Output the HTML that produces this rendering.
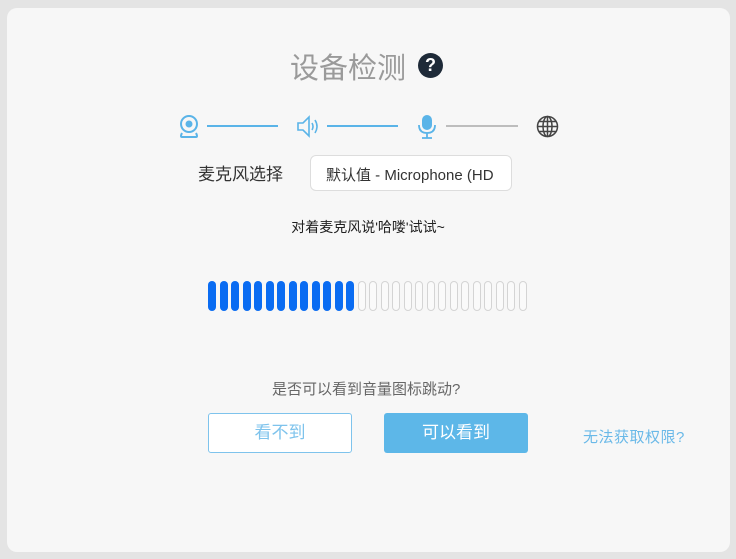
<!DOCTYPE html>
<html><head><meta charset="utf-8"><style>
body{margin:0;width:736px;height:559px;background:#e4e4e4;font-family:"Liberation Sans","Noto Sans CJK SC",sans-serif;position:relative;overflow:hidden}
.card{position:absolute;left:7px;top:8px;width:723px;height:544px;background:#f7f7f7;border-radius:10px}
.a{position:absolute;white-space:nowrap}
.line{position:absolute;height:2px;top:125px}
.bar{position:absolute;top:281px;width:6px;height:28px;border-radius:4px}
</style></head><body>
<div class="card"></div>
<div class="a" style="left:290px;top:45px;font-size:29px;color:#9a9a9a">设备检测</div>
<div class="a" style="left:418px;top:53px;width:25px;height:25px;border-radius:50%;background:#1e2a38;color:#fff;font-size:18px;font-weight:bold;text-align:center;line-height:25px">?</div>
<svg class="a" style="left:178px;top:114px" width="24" height="26" viewBox="0 0 24 26"><circle cx="11" cy="10" r="8" fill="none" stroke="#5ab4e8" stroke-width="2"/><circle cx="11" cy="10" r="3.5" fill="#5ab4e8"/><path d="M4 19 Q2 23 4 23 H18 Q20 23 18 19" fill="none" stroke="#5ab4e8" stroke-width="2"/></svg>
<div class="line" style="left:207px;width:71px;background:#5ab4e8"></div>
<svg class="a" style="left:296px;top:114px" width="26" height="26" viewBox="0 0 26 26"><path d="M2 9 H7 L13 3 V22 L7 16 H2 Z" fill="none" stroke="#5ab4e8" stroke-width="1.6"/><path d="M16 9 Q18 12.5 16 16 M19 6 Q23 12.5 19 19" fill="none" stroke="#5ab4e8" stroke-width="1.6"/></svg>
<div class="line" style="left:327px;width:71px;background:#5ab4e8"></div>
<svg class="a" style="left:416px;top:114px" width="22" height="26" viewBox="0 0 22 26"><rect x="6" y="1" width="10" height="15" rx="5" fill="#5ab4e8"/><path d="M3 11 Q3 19 11 19 Q19 19 19 11 M11 19 V24 M6 24 H16" fill="none" stroke="#5ab4e8" stroke-width="1.8"/></svg>
<div class="line" style="left:446px;width:72px;background:#bdbdbd"></div>
<svg class="a" style="left:536px;top:115px" width="23" height="23" viewBox="0 0 23 23" fill="none" stroke="#444" stroke-width="1.5"><circle cx="11.5" cy="11.5" r="10"/><ellipse cx="11.5" cy="11.5" rx="4.5" ry="10"/><path d="M1.5 11.5 H21.5 M3 6.5 H20 M3 16.5 H20 M11.5 1.5 V21.5"/></svg>
<div class="a" style="left:198px;top:160px;font-size:17px;color:#333">麦克风选择</div>
<div class="a" style="left:310px;top:155px;width:202px;height:36px;background:#fff;border:1px solid #ddd;border-radius:6px;box-sizing:border-box"></div>
<div class="a" style="left:326px;top:164px;font-size:15px;color:#333">默认值 - Microphone (HD</div>
<div class="a" style="left:0;width:736px;text-align:center;top:217px;font-size:14px;color:#222">对着麦克风说'哈喽'试试~</div>
<div id="bars"></div>
<div class="a" style="left:272px;top:378px;font-size:15px;color:#666">是否可以看到音量图标跳动?</div>
<div class="a" style="left:208px;top:413px;width:144px;height:40px;border:1px solid #7ec3ec;border-radius:3px;box-sizing:border-box;text-align:center;line-height:38px;font-size:17px;color:#7ec3ec;background:#fff">看不到</div>
<div class="a" style="left:384px;top:413px;width:144px;height:40px;background:#5db7e8;border-radius:3px;text-align:center;line-height:40px;font-size:17px;color:#fff">可以看到</div>
<div class="a" style="left:583px;top:426px;font-size:15px;letter-spacing:0.5px;color:#6ab9e8">无法获取权限?</div>
<script>
var h='';for(var i=0;i<28;i++){var x=208+i*11.5;h+=i<13?'<div class="bar" style="left:'+x+'px;background:#0a6cf2;width:8px;height:30px"></div>':'<div class="bar" style="left:'+x+'px;border:1px solid #d4d4d4;background:#fafafa"></div>';}
document.getElementById('bars').innerHTML=h;
</script>
</body></html>
